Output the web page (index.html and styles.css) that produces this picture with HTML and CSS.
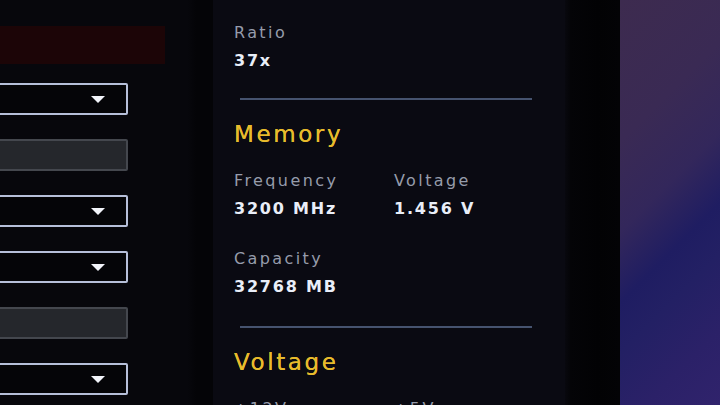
FILE: index.html
```html
<!DOCTYPE html>
<html lang="en">
<head>
  <meta charset="UTF-8">
  <meta name="viewport" content="width=device-width, initial-scale=1.0">
  <title>System Information</title>
  <link rel="stylesheet" href="styles.css">
</head>

<body>
  <div class="screen">
    <!-- left side: settings controls -->
    <aside class="settings">
      <div class="alert-bar"></div>
      <div class="controls">
        <div class="select"><span class="caret"></span></div>
        <div class="field-box"></div>
        <div class="select"><span class="caret"></span></div>
        <div class="select"><span class="caret"></span></div>
        <div class="field-box"></div>
        <div class="select"><span class="caret"></span></div>
      </div>
    </aside>

    <!-- right side: information panel -->
    <section class="info">
      <div class="item">
        <div class="label">Ratio</div>
        <div class="value">37x</div>
      </div>

      <hr class="divider">

      <h2 class="heading">Memory</h2>
      <div class="pair">
        <div class="item">
          <div class="label">Frequency</div>
          <div class="value">3200 MHz</div>
        </div>
        <div class="item">
          <div class="label">Voltage</div>
          <div class="value">1.456 V</div>
        </div>
      </div>
      <div class="item capacity">
        <div class="label">Capacity</div>
        <div class="value">32768 MB</div>
      </div>

      <hr class="divider second">

      <h2 class="heading">Voltage</h2>
      <div class="pair">
        <div class="item">
          <div class="label">+12V</div>
        </div>
        <div class="item">
          <div class="label">+5V</div>
        </div>
      </div>
    </section>

    <div class="bezel"></div>
    <div class="wallpaper"></div>
  </div>
</body>
</html>
```

FILE: styles.css
```css
html, body {
  margin: 0; /* 余白なし */
  height: 100%;
  background-color: #050509;
  overflow: hidden;
}
.screen {
  display: grid;
  grid-template-columns: 213px 352px 55px 1fr;
  height: 405px;
  font-family: "DejaVu Sans", "Open Sans", sans-serif;
}

/* ---- left settings column ---- */
.settings {
  background: linear-gradient(to right, #07070c 0%, #07070c 88%, #040407 92%, #040407 100%);
  padding-top: 26px;
  overflow: hidden;
}
.alert-bar {
  width: 165px;
  height: 38px;
  background-color: #1c0507; /* 暗い赤 */
  margin-bottom: 19px;
}
.controls {
  display: flex;
  flex-direction: column;
  gap: 24px;
  margin-left: -12px;
}
.select,
.field-box {
  box-sizing: border-box;
  width: 140px;
  height: 32px;
  border-radius: 2px;
}
.select {
  display: flex;
  align-items: center;
  justify-content: flex-end;
  padding-right: 21px;
  border: 2px solid #b6bfd9;
  background-color: #050508;
}
.caret {
  width: 0;
  height: 0;
  border-left: 7px solid transparent;
  border-right: 7px solid transparent;
  border-top: 7px solid #f2f4fa;
}
.field-box {
  border: 2px solid #44474e;
  background-color: #25272c;
}

/* ---- info panel ---- */
.info {
  background-color: #0a0a12;
  padding: 20px 0 0 21px;
  overflow: hidden;
}
.label {
  font-size: 16px;
  line-height: 26px;
  letter-spacing: 2.4px;
  color: #969cab;
}
.value {
  font-size: 16px;
  font-weight: bold;
  line-height: 29px;
  letter-spacing: 1.8px;
  color: #e9eef8;
}
.divider {
  border: none;
  height: 2px;
  background-color: #46536f;
  width: 292px;
  margin: 23px 0 0 6px;
}
.divider.second {
  margin-top: 25px;
}
.heading {
  margin: 19px 0 0 0;
  font-size: 23px;
  line-height: 30px;
  font-weight: 500;
  letter-spacing: 2.6px;
  color: #e8bb2c;
  text-shadow: 0 0 0.6px #e8bb2c;
}
.pair {
  display: grid;
  grid-template-columns: 160px 1fr;
  margin-top: 19px;
}
.capacity {
  margin-top: 23px;
}

/* ---- monitor edge and desktop ---- */
.bezel {
  background: linear-gradient(to right, #08080e 0%, #040407 10%, #020204 60%, #030306 100%);
}
.wallpaper {
  background: linear-gradient(135deg, #3d2b4f 0%, #3a2a54 28%, #33275b 46%, #1f1d62 60%, #232064 70%, #2b2168 85%, #30236c 100%);
}
```
